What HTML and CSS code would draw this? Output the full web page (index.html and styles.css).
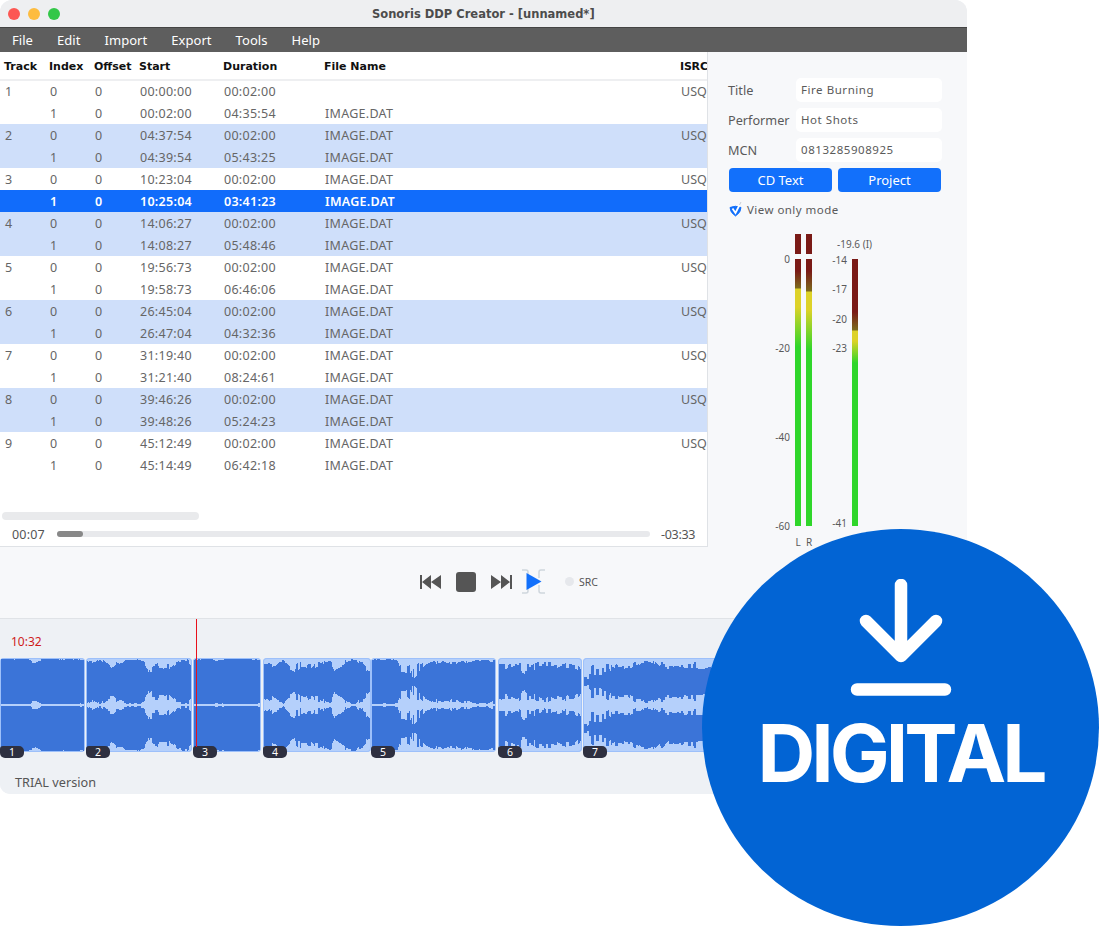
FILE: index.html
```html
<!DOCTYPE html>
<html lang="en">
<head>
    <meta charset="UTF-8">
    <title>Sonoris DDP Creator</title>
    <link rel="stylesheet" href="styles.css">
</head>
<body>
    <div class="window">
        <div class="titlebar">
            <span class="light light-red"></span>
            <span class="light light-yellow"></span>
            <span class="light light-green"></span>
            <div class="title">Sonoris DDP Creator - [unnamed*]</div>
        </div>
        <div class="menubar">
            <span>File</span><span>Edit</span><span>Import</span><span>Export</span><span>Tools</span><span>Help</span>
        </div>

        <div class="main">
            <div class="left">
                <!-- Track list -->
                <div class="track-panel">
                    <div class="table-wrap">
                        <table class="tracks">
                            <colgroup>
                                <col class="c-track"><col class="c-index"><col class="c-offset"><col class="c-start"><col class="c-dur"><col class="c-file"><col class="c-isrc">
                            </colgroup>
                            <thead>
                                <tr><th>Track</th><th>Index</th><th>Offset</th><th>Start</th><th>Duration</th><th>File Name</th><th>ISRC</th></tr>
                            </thead>
                            <tbody>
                                <tr><td>1</td><td>0</td><td>0</td><td>00:00:00</td><td>00:02:00</td><td></td><td>USQ</td></tr>
                                <tr><td></td><td>1</td><td>0</td><td>00:02:00</td><td>04:35:54</td><td>IMAGE.DAT</td><td></td></tr>
                                <tr class="band"><td>2</td><td>0</td><td>0</td><td>04:37:54</td><td>00:02:00</td><td>IMAGE.DAT</td><td>USQ</td></tr>
                                <tr class="band"><td></td><td>1</td><td>0</td><td>04:39:54</td><td>05:43:25</td><td>IMAGE.DAT</td><td></td></tr>
                                <tr><td>3</td><td>0</td><td>0</td><td>10:23:04</td><td>00:02:00</td><td>IMAGE.DAT</td><td>USQ</td></tr>
                                <tr class="selected"><td></td><td>1</td><td>0</td><td>10:25:04</td><td>03:41:23</td><td>IMAGE.DAT</td><td></td></tr>
                                <tr class="band"><td>4</td><td>0</td><td>0</td><td>14:06:27</td><td>00:02:00</td><td>IMAGE.DAT</td><td>USQ</td></tr>
                                <tr class="band"><td></td><td>1</td><td>0</td><td>14:08:27</td><td>05:48:46</td><td>IMAGE.DAT</td><td></td></tr>
                                <tr><td>5</td><td>0</td><td>0</td><td>19:56:73</td><td>00:02:00</td><td>IMAGE.DAT</td><td>USQ</td></tr>
                                <tr><td></td><td>1</td><td>0</td><td>19:58:73</td><td>06:46:06</td><td>IMAGE.DAT</td><td></td></tr>
                                <tr class="band"><td>6</td><td>0</td><td>0</td><td>26:45:04</td><td>00:02:00</td><td>IMAGE.DAT</td><td>USQ</td></tr>
                                <tr class="band"><td></td><td>1</td><td>0</td><td>26:47:04</td><td>04:32:36</td><td>IMAGE.DAT</td><td></td></tr>
                                <tr><td>7</td><td>0</td><td>0</td><td>31:19:40</td><td>00:02:00</td><td>IMAGE.DAT</td><td>USQ</td></tr>
                                <tr><td></td><td>1</td><td>0</td><td>31:21:40</td><td>08:24:61</td><td>IMAGE.DAT</td><td></td></tr>
                                <tr class="band"><td>8</td><td>0</td><td>0</td><td>39:46:26</td><td>00:02:00</td><td>IMAGE.DAT</td><td>USQ</td></tr>
                                <tr class="band"><td></td><td>1</td><td>0</td><td>39:48:26</td><td>05:24:23</td><td>IMAGE.DAT</td><td></td></tr>
                                <tr><td>9</td><td>0</td><td>0</td><td>45:12:49</td><td>00:02:00</td><td>IMAGE.DAT</td><td>USQ</td></tr>
                                <tr><td></td><td>1</td><td>0</td><td>45:14:49</td><td>06:42:18</td><td>IMAGE.DAT</td><td></td></tr>
                            </tbody>
                        </table>
                    </div>
                    <div class="hscroll"></div>
                    <div class="progress">
                        <span class="progress-time">00:07</span>
                        <div class="progress-track"><div class="progress-thumb"></div></div>
                        <span class="progress-left">-03:33</span>
                    </div>
                </div>

                <!-- Transport -->
                <div class="transport">
                    <svg class="t-icon" width="22" height="16" viewBox="0 0 22 16"><path d="M0 1h2v14H0zM2 8l9-7v14zM11 8l10-7v14z" fill="#555"/></svg>
                    <div class="t-stop"></div>
                    <svg class="t-icon t-next" width="22" height="16" viewBox="0 0 22 16"><path d="M20 1h2v14h-2zM20 8l-9-7v14zM11 8L1 1v14z" fill="#555"/></svg>
                    <svg class="t-icon t-play" width="25" height="25" viewBox="0 0 25 25">
                        <path d="M1 1h4q2 0 2 2v6M1 24h4q2 0 2-2v-6M24 1h-4q-2 0-2 2v6M24 24h-4q-2 0-2-2v-6" fill="none" stroke="#cfd6dd" stroke-width="1.5"/>
                        <path d="M5.500 4l15 8.500-15 8.500z" fill="#1270fb"/>
                    </svg>
                    <span class="src-dot"></span>
                    <span class="src-label">SRC</span>
                </div>
            </div>

            <!-- Right side -->
            <div class="right">
                <div class="field"><label>Title</label><div class="input">Fire Burning</div></div>
                <div class="field"><label>Performer</label><div class="input">Hot Shots</div></div>
                <div class="field"><label>MCN</label><div class="input">0813285908925</div></div>
                <div class="buttons">
                    <div class="btn">CD Text</div>
                    <div class="btn">Project</div>
                </div>
                <div class="check">
                    <svg width="14" height="15" viewBox="0 0 14 15">
                        <path d="M1 5.500q5.500-2.500 11 0 0 5-5.500 8.500-5.500-3.500-5.500-8.500z" fill="#1270fb" stroke="#1270fb" stroke-linejoin="round"/>
                        <path d="M3.500 6.500l3 4.500 4-8" fill="none" stroke="#fff" stroke-width="1.800"/>
                        <path d="M10.500 3l1.500-3" fill="none" stroke="#c9cdd3" stroke-width="1"/>
                    </svg>
                    <span>View only mode</span>
                </div>

                <div class="meters">
                    <div class="scale scale-lr">
                        <span>0</span><span>-20</span><span>-40</span><span>-60</span>
                    </div>
                    <div class="lr-group">
                        <div class="lr-col">
                            <div class="peak"></div>
                            <div class="bar bar-l"></div>
                            <div class="ch-name">L</div>
                        </div>
                        <div class="lr-col">
                            <div class="peak"></div>
                            <div class="bar bar-r"></div>
                            <div class="ch-name">R</div>
                        </div>
                    </div>
                    <div class="loud-group">
                        <div class="loud-value">-19.6 (I)</div>
                        <div class="loud-row">
                            <div class="scale scale-loud">
                                <span>-14</span><span>-17</span><span>-20</span><span>-23</span><span class="scale-end">-41</span>
                            </div>
                            <div class="bar bar-loud"></div>
                        </div>
                    </div>
                </div>
            </div>
        </div>

        <!-- Timeline -->
        <div class="timeline">
            <div class="playhead"></div>
            <div class="time-mark">10:32</div>
            <div class="clips">
                <div class="clip" style="width:85px" data-env="1,1,1,1,1,1,1,1,5,5,3,1,1,1,1,1,2,1,1,1,1,3,1"><span class="clip-num">1</span></div>
                <div class="clip" style="width:106px;margin-left:1px" data-env="2,6,3,3,11,13,7,5,2,2,2,3,14,16,13,14,16,10,5,3,3,10"><span class="clip-num">2</span></div>
                <div class="clip" style="width:68px;margin-left:1px" data-env="3,1,1,1,2,2,2,1,1,1,1,1,1,1,3"><span class="clip-num">3</span></div>
                <div class="clip" style="width:108px;margin-left:2px" data-env="18,14,9,5,4,11,14,11,10,13,10,9,5,4,15,12,4,2,2,8,14,22"><span class="clip-num">4</span></div>
                <div class="clip" style="width:125px" data-env="2,2,2,2,2,2,2,19,19,21,19,15,9,6,4,6,6,4,5,7,5,4,7,4,4,3,2,2,5,2"><span class="clip-num">5</span></div>
                <div class="clip" style="width:84px;margin-left:2px" data-env="12,11,12,10,10,14,16,14,12,11,10,11,13,12,10,11,12,12,16,24"><span class="clip-num">6</span></div>
                <div class="clip" style="width:135px;margin-left:1px" data-env="22,21,20,19,17,15,12,10,7,6,6,11,13,11,11,10,11,11,12,11"><span class="clip-num">7</span></div>
            </div>
            <div class="trial">TRIAL version</div>
        </div>
    </div>

    <!-- Badge over the window -->
    <div class="badge">
        <svg class="badge-arrow" width="102" height="118" viewBox="0 0 102 118">
            <path d="M51 6v70M16 42l35 35 35-35M7 110.500h88" fill="none" stroke="#fff" stroke-width="12.500" stroke-linecap="round" stroke-linejoin="round"/>
        </svg>
        <div class="badge-text">DIGITAL</div>
    </div>

    <script src="waves.js"></script>
</body>
</html>
```

FILE: styles.css
```css
* {
    box-sizing: border-box;
}
body {
    margin: 0;
    height: 926px;
    overflow: hidden;
    background-color: white;
    font-family: "Noto Sans", sans-serif;
    color: #5a5a5a;
}
.window {
    width: 967px;
    height: 794px;
    display: flex;
    flex-direction: column;
    border-radius: 12px 12px 10px 10px;
    overflow: hidden;
    background-color: #eef1f5;
}

/* Title and menu */
.titlebar {
    height: 28px;
    display: flex;
    align-items: center;
    gap: 8px;
    padding-left: 8px;
    background-color: #eeeff1;
    border-bottom: 1px solid #444;
}
.light {
    width: 12px;
    height: 12px;
    border-radius: 50%;
}
.light-red { background-color: #fc5753; }
.light-yellow { background-color: #fdbc40; }
.light-green { background-color: #33c748; }
.title {
    margin-left: 304px;
    font-family: "DejaVu Sans", sans-serif;
    font-size: 11.5px;
    font-weight: bold;
    color: #4c4c4c;
}
.menubar {
    height: 24px;
    display: flex;
    align-items: center;
    gap: 24px;
    padding: 0 0 1px 12px;
    background-color: #5e5e5e;
    color: white;
    font-size: 13px;
    letter-spacing: 0.05px;
}

.main {
    height: 567px;
    display: flex;
    border-bottom: 1px solid #e0e3e7;
    background-color: #f7f8fa;
}
.left {
    width: 708px;
    display: flex;
    flex-direction: column;
}

/* Track list */
.track-panel {
    height: 495px;
    display: flex;
    flex-direction: column;
    background-color: white;
    border-right: 1px solid #dfe2e6;
    border-bottom: 1px solid #dfe2e6;
}
.table-wrap {
    height: 458px;
    overflow: hidden;
}
.tracks {
    width: 707px;
    table-layout: fixed;
    border-collapse: collapse;
    font-size: 12.5px;
}
.c-track, .c-index, .c-offset { width: 45px; }
.c-start { width: 84px; }
.c-dur { width: 101px; }
.c-file { width: 357px; }
.tracks th {
    height: 28px;
    padding: 2px 0 0 4px;
    text-align: left;
    font-family: "DejaVu Sans", sans-serif;
    font-size: 11px;
    color: #111;
    white-space: nowrap;
    border-bottom: 2px solid #eeeff1;
}
.tracks td {
    height: 22px;
    padding: 0 0 0 5px;
    white-space: nowrap;
    letter-spacing: 0.28px;
    color: #666;
}
.tracks th:last-child {
    padding-left: 3px;
    letter-spacing: -0.2px;
}
.tracks td:last-child {
    padding-left: 4px;
    letter-spacing: 0;
}
.band td {
    background-color: #cfdffa;
}
.selected td {
    background-color: #116cfb;
    color: white;
    font-weight: 600;
}
.hscroll {
    width: 197px;
    height: 8px;
    margin: 2px 0 0 2px;
    border-radius: 4px;
    background-color: #e9eaec;
}
.progress {
    flex: 1;
    display: flex;
    align-items: center;
    padding: 2px 0 0 12px;
    font-size: 12.5px;
    color: #555;
}
.progress-time {
    width: 33px;
    letter-spacing: 0.2px;
}
.progress-left {
    letter-spacing: -0.3px;
}
.progress-track {
    flex: none;
    width: 593px;
    height: 6px;
    margin: 0 11px 0 12px;
    border-radius: 3px;
    background-color: #e8e9ec;
}
.progress-thumb {
    width: 26px;
    height: 6px;
    border-radius: 3px;
    background-color: #888;
}

/* Transport */
.transport {
    flex: 1;
    display: flex;
    align-items: center;
    padding: 0 0 2px 420px;
}
.t-stop {
    width: 20px;
    height: 20px;
    margin-left: 14px;
    border-radius: 3px;
    background-color: #555;
}
.t-next {
    margin-left: 14px;
}
.t-play {
    margin-left: 9px;
}
.src-dot {
    width: 9px;
    height: 9px;
    margin-left: 19px;
    border-radius: 50%;
    background-color: #e6e8ec;
}
.src-label {
    margin-left: 5px;
    font-size: 10.5px;
    color: #555;
}

/* Right panel */
.right {
    flex: 1;
    padding: 26px 25px 0 20px;
    font-size: 12.7px;
}
.field {
    height: 24px;
    margin-bottom: 6px;
    display: flex;
    align-items: center;
}
.field label {
    width: 68px;
}
.input {
    width: 146px;
    height: 24px;
    padding-left: 5px;
    line-height: 23px;
    border-radius: 5px;
    background-color: white;
    font-size: 11.5px;
    letter-spacing: 0.55px;
}
.buttons {
    display: flex;
    gap: 6px;
    margin-left: 1px;
}
.btn {
    width: 103px;
    height: 24px;
    line-height: 24px;
    text-align: center;
    border-radius: 4px;
    background-color: #1270fb;
    color: white;
    font-size: 13px;
}
.check {
    height: 16px;
    margin: 9px 0 0 1px;
    display: flex;
    align-items: center;
    gap: 4px;
    font-size: 11.5px;
    letter-spacing: 0.45px;
}

/* Meters */
.meters {
    display: flex;
    margin: 17px 0 0 42px;
    font-size: 10px;
    line-height: 12px;
}
.scale {
    display: flex;
    flex-direction: column;
    text-align: right;
}
.scale-lr {
    width: 20px;
    height: 279px;
    margin: 19px 5px 0 0;
    justify-content: space-between;
}
.lr-group {
    display: flex;
    gap: 5px;
}
.lr-col {
    width: 6px;
    display: flex;
    flex-direction: column;
    align-items: center;
}
.peak {
    width: 6px;
    height: 20px;
    margin-bottom: 5px;
    background-color: #7a1a16;
}
.bar {
    width: 6px;
    height: 267px;
}
.bar-l {
    background: linear-gradient(#7a1a16 0, #7a1a16 12px, #7c6a1c 29px, #ddd228 30px, #ddd228 48px, #2fd62a 88px);
}
.bar-r {
    background: linear-gradient(#7a1a16 0, #7a1a16 12px, #7c6a1c 32px, #ddd228 33px, #ddd228 51px, #2fd62a 91px);
}
.bar-loud {
    background: linear-gradient(#7a1a16 0, #7a1a16 53px, #7c6a1c 71px, #ddd228 72px, #ddd228 82px, #2fd62a 104px);
}
.ch-name {
    width: 12px;
    margin-top: 10px;
    text-align: center;
    white-space: nowrap;
}
.loud-group {
    margin-left: 25px;
}
.loud-value {
    height: 25px;
    padding-top: 4px;
    white-space: nowrap;
}
.loud-row {
    display: flex;
    margin-left: -21px;
}
.scale-loud {
    width: 31px;
    height: 275px;
    margin-right: 5px;
    gap: 17.300px;
    margin-top: -5px;
}
.scale-end {
    margin-top: auto;
}

/* Timeline */
.timeline {
    flex: 1;
    position: relative;
    padding: 14px 0 0;
    background-color: #eef1f5;
}
.playhead {
    position: absolute;
    left: 196px;
    top: 0;
    width: 1px;
    height: 128px;
    background-color: #e8101a;
    z-index: 2;
}
.time-mark {
    height: 25px;
    padding-left: 11px;
    font-size: 12px;
    color: #cf1b1b;
}
.clips {
    display: flex;
    height: 94px;
}
.clip {
    position: relative;
    flex: none;
    border-radius: 4px;
    background-color: #b5d0fb;
    box-shadow: inset 0 0 0 1px #9dc0fa;
}
.clip svg {
    display: block;
    border-radius: 4px;
}
.clip-num {
    position: absolute;
    left: 0;
    bottom: -6px;
    width: 24px;
    height: 12px;
    border-radius: 3px 5px 5px 5px;
    background-color: #2e3040;
    color: white;
    font-size: 10.5px;
    line-height: 12px;
    text-align: center;
    z-index: 1;
}
.trial {
    margin: 21px 0 0 15px;
    font-size: 12.7px;
    color: #555;
}

/* Badge */
.badge {
    position: absolute;
    left: 702px;
    top: 529px;
    width: 397px;
    height: 397px;
    display: flex;
    flex-direction: column;
    align-items: center;
    padding-top: 50px;
    border-radius: 50%;
    background-color: #0264d4;
    z-index: 3;
}
.badge-arrow {
    flex: none;
}
.badge-text {
    margin-top: 7px;
    font-family: Inter, sans-serif;
    font-size: 80px;
    font-weight: 700;
    line-height: 98px;
    letter-spacing: -4px;
    color: white;
}
```

FILE: waves.js
```js
// Draws the waveform of each clip from its rough envelope (data-env)
var seed = 7;
function rnd() {
    seed = (seed * 1103515245 + 12345) % 2147483648;
    return seed / 2147483648;
}

function depthAt(env, pos) {
    var p = pos * (env.length - 1);
    var i = Math.floor(p);
    var next = env[Math.min(i + 1, env.length - 1)];
    return env[i] + (next - env[i]) * (p - i);
}

document.querySelectorAll('.clip').forEach(function (clip) {
    var env = clip.dataset.env.split(',').map(Number);
    var w = parseInt(clip.style.width);
    var h = 94, mid = 47;
    var d = '';
    var hold = 0, factor = 1;
    for (var x = 1; x < w - 1; x++) {
        // keep the same level for a few pixels so it reads as spikes, not fuzz
        if (hold-- <= 0) {
            factor = 0.3 + 0.7 * rnd();
            hold = Math.floor(rnd() * 3);
        }
        var depth = depthAt(env, x / w) * factor;
        depth = Math.min(depth, 23);
        var edge = Math.max(depth - 0.5, 0);
        var inner = Math.max(depth, 1);
        // top channel, then the bottom one mirrored
        d += 'M' + x + ' ' + (1 + edge).toFixed(1) + 'h1V' + (mid - inner).toFixed(1) + 'h-1z';
        d += 'M' + x + ' ' + (mid + inner).toFixed(1) + 'h1V' + (h - 1 - edge).toFixed(1) + 'h-1z';
    }
    var svg = '<svg width="' + w + '" height="' + h + '" viewBox="0 0 ' + w + ' ' + h + '">' +
        '<path d="' + d + '" fill="#3b74d8" shape-rendering="crispEdges"/></svg>';
    clip.insertAdjacentHTML('afterbegin', svg);
});
```
